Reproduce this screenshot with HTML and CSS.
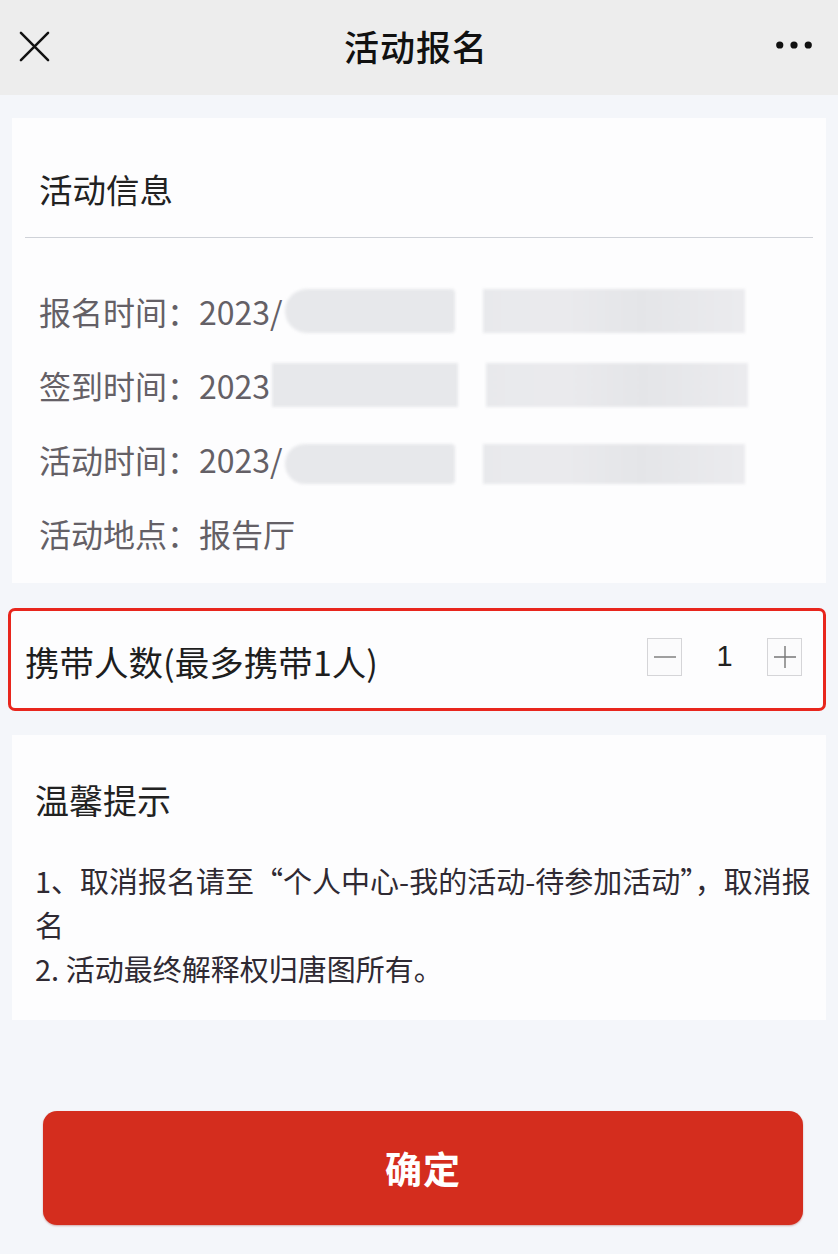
FILE: index.html
```html
<!DOCTYPE html>
<html lang="zh-CN">
<head>
<meta charset="utf-8">
<title>活动报名</title>
<link rel="stylesheet" href="styles.css">
</head>
<body>
<header class="nav">
  <div class="nav-left">
    <svg class="icon-close" width="32" height="32" viewBox="0 0 32 32"><path d="M2 2 L30 30 M30 2 L2 30" stroke="#111" stroke-width="2.6" stroke-linecap="round" fill="none"/></svg>
  </div>
  <div class="nav-title">活动报名</div>
  <div class="nav-right">
    <svg class="icon-more" width="40" height="12" viewBox="0 0 40 12"><circle cx="5" cy="6" r="3.8" fill="#111"/><circle cx="20" cy="6" r="3.8" fill="#111"/><circle cx="35" cy="6" r="3.8" fill="#111"/></svg>
  </div>
</header>

<main class="page">
  <section class="card info">
    <div class="card-head">活动信息</div>
    <ul class="info-list">
      <li class="info-row">报名时间：2023/<span class="mask m1"></span><span class="mask m2"></span></li>
      <li class="info-row">签到时间：2023<span class="mask m3"></span><span class="mask m2"></span></li>
      <li class="info-row">活动时间：2023/<span class="mask m1 flat"></span><span class="mask m2 flat"></span></li>
      <li class="info-row">活动地点：报告厅</li>
    </ul>
  </section>

  <section class="card carry">
    <div class="carry-label">携带人数(最多携带1人)</div>
    <div class="stepper">
      <span class="step-btn"><svg width="24" height="24" viewBox="0 0 24 24"><path d="M1 12 H23" stroke="#777" stroke-width="1.4"/></svg></span>
      <span class="step-val">1</span>
      <span class="step-btn"><svg width="24" height="24" viewBox="0 0 24 24"><path d="M1 12 H23 M12 1 V23" stroke="#777" stroke-width="1.4"/></svg></span>
    </div>
  </section>

  <section class="card tips">
    <h2 class="tips-title">温馨提示</h2>
    <p class="tips-text">1、取消报名请至“个人中心-我的活动-待参加活动”，取消报<br>名<br>2. 活动最终解释权归唐图所有。</p>
  </section>

  <div class="actions">
    <button class="btn-confirm">确定</button>
  </div>
</main>
</body>
</html>
```

FILE: styles.css
```css
* { box-sizing: border-box; }
html, body { margin: 0; padding: 0; }
body {
  background: #f4f6fa;
  font-family: "Noto Sans CJK SC", "Noto Sans", sans-serif;
  color: #222;
  width: 838px;
  min-height: 1254px;
}

.nav {
  height: 95px;
  background: #ededed;
  display: grid;
  grid-template-columns: 1fr auto 1fr;
  align-items: center;
  padding: 0 25px 0 19px;
}
.nav-left { display: flex; align-items: center; }
.icon-close { width: 31px; height: 31px; margin-top: -3px; }
.nav-title {
  font-size: 35px;
  font-weight: 500;
  color: #111;
  letter-spacing: 1px;
  margin-top: -4px;
}
.nav-right { display: flex; justify-content: flex-end; align-items: center; margin-top: -6px; }
.icon-more { width: 38px; }

.page { padding: 23px 12px 0; }

.card { background: #fdfdfe; }

.info { padding-bottom: 13px; }
.card-head {
  margin: 0 13px;
  height: 120px;
  padding: 22px 0 0 14px;
  display: flex;
  align-items: center;
  font-size: 33.5px;
  color: #222;
  border-bottom: 1px solid #cfd2d8;
}
.info-list { list-style: none; margin: 0; padding: 36px 0 0 27px; }
.info-row {
  height: 74px;
  display: flex;
  align-items: center;
  font-size: 32px;
  color: #646066;
  white-space: nowrap;
}
.mask {
  display: inline-block;
  height: 44px;
  background: #e7e8eb;
  filter: blur(1.5px);
}
.m1 { width: 170px; margin-left: 2px; border-radius: 22px 4px 4px 22px; }
.m2 { width: 262px; margin-left: 28px; background: linear-gradient(90deg, #e8e9ec, #eaeaed 30%, #e4e5e8 60%, #ebebee); }
.m3 { width: 186px; margin-left: 2px; }
.flat { height: 40px; margin-top: 10px; }

.carry {
  margin: 25px 0 0 -4px;
  height: 103px;
  border: 3px solid #e8261d;
  border-radius: 7px;
  display: flex;
  align-items: center;
  justify-content: space-between;
  padding: 0 21px 0 14px;
}
.carry-label { font-size: 34.5px; color: #1e1e1e; margin-top: 2px; }
.stepper { display: flex; align-items: center; margin-top: -6px; }
.step-btn {
  width: 35px;
  height: 38px;
  border: 1px solid #d5d5d8;
  display: flex;
  align-items: center;
  justify-content: center;
  background: #fbfbfc;
}
.step-val {
  width: 85px;
  text-align: center;
  font-size: 29px;
  color: #222;
  font-family: "Liberation Sans", "Noto Sans CJK SC", sans-serif;
}

.tips { margin-top: 24px; padding: 48px 23px 30px; }
.tips-title { margin: 0; font-size: 34px; font-weight: 400; line-height: 34px; color: #222; }
.tips-text {
  margin: 41px 0 0;
  font-size: 29px;
  line-height: 44px;
  color: #2f2a33;
  white-space: nowrap;
}

.actions { padding: 91px 0 29px 31px; }
.btn-confirm {
  display: block;
  width: 760px;
  height: 114px;
  border: none;
  border-radius: 14px;
  background: #d42d1e;
  color: #fff;
  font-family: "Noto Sans CJK SC", sans-serif;
  font-size: 37px;
  font-weight: 700;
  letter-spacing: 1px;
  box-shadow: 0 1px 2px rgba(150, 30, 20, 0.35);
}
```
